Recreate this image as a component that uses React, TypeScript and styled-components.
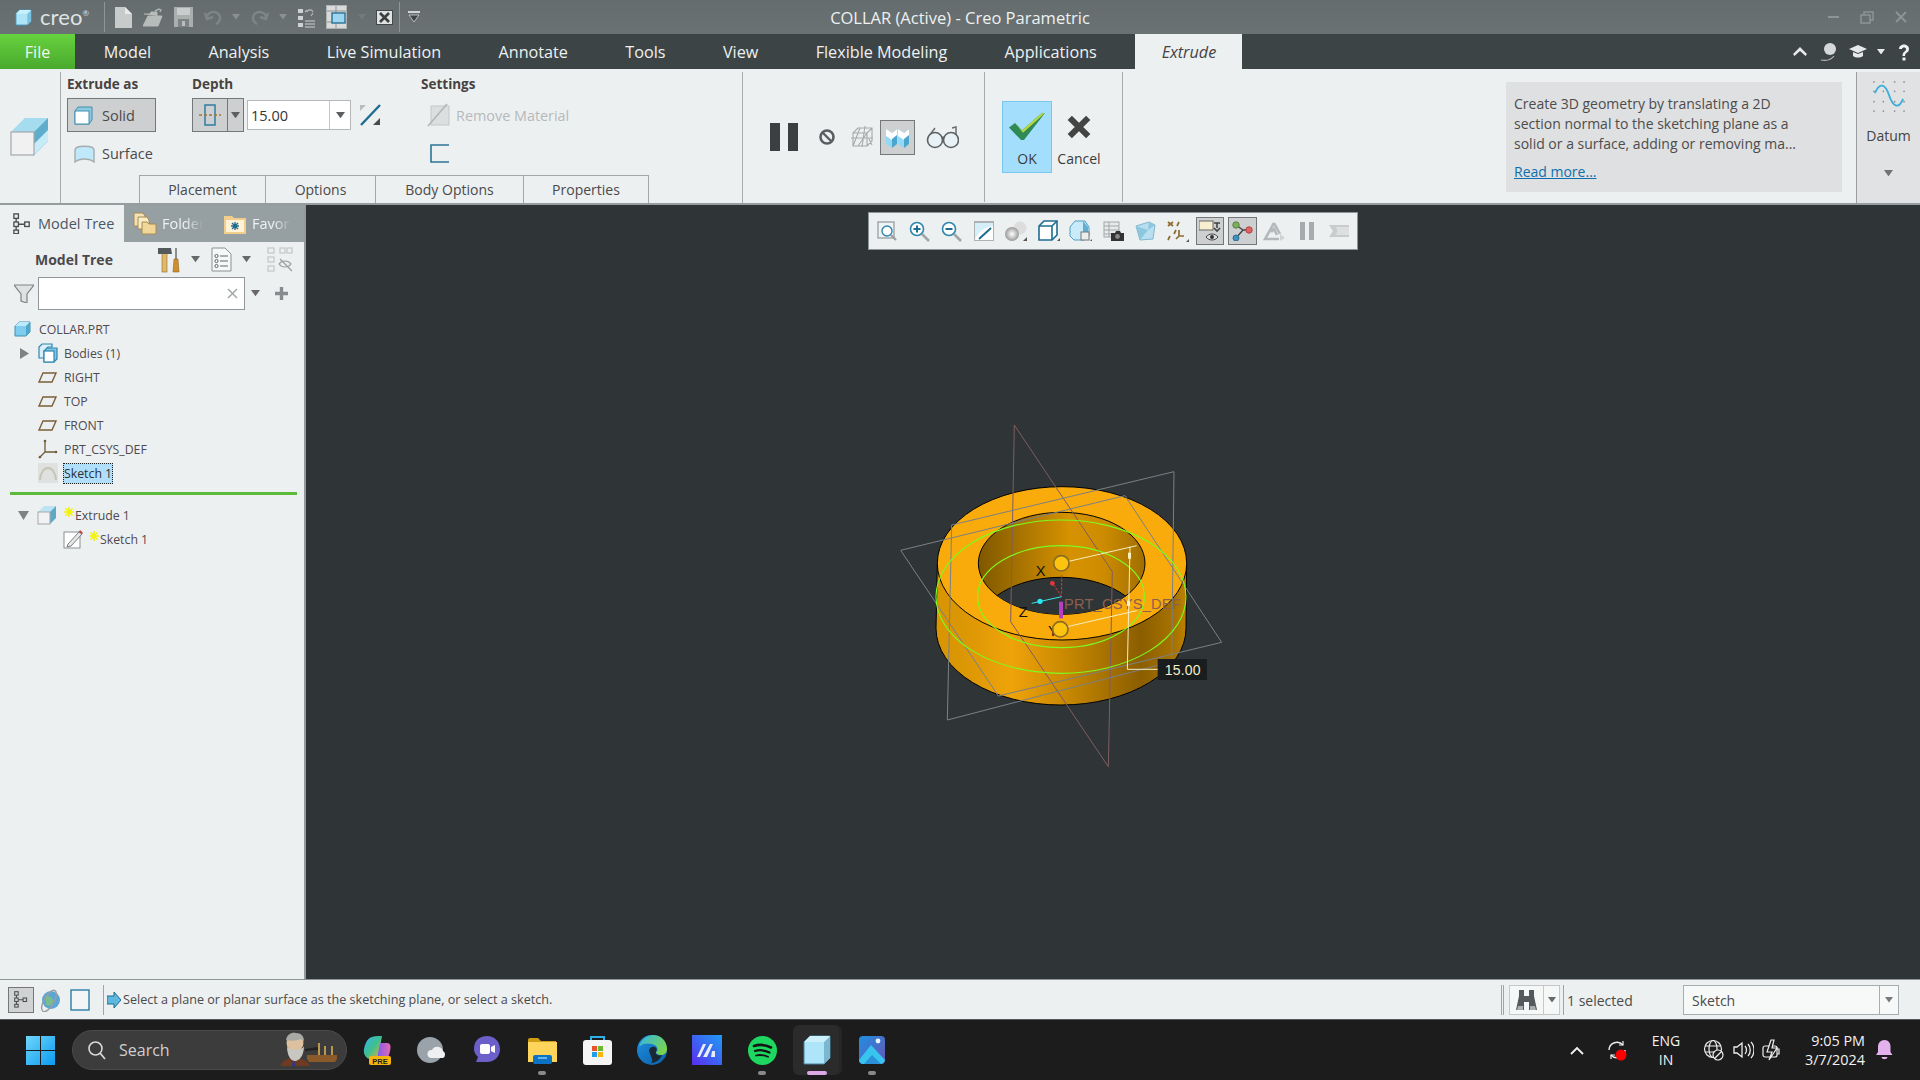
import React from "react";
import styled, { createGlobalStyle } from "styled-components";

const Global = createGlobalStyle`
  html, body { margin: 0; padding: 0; background: #2f3536; }
  body { font-family: "Open Sans", "Noto Sans", "Liberation Sans", sans-serif; overflow: hidden; }
  * { box-sizing: border-box; }
`;

const Page = styled.div`
  width: 1920px; height: 1080px; display: grid;
  grid-template-rows: 34px 35px 136px 1fr 41px 60px;
`;

/* ---------- title bar ---------- */
const TitleBar = styled.header`
  display: grid; grid-template-columns: 1fr auto 1fr; align-items: center;
  background: linear-gradient(#656c6d, #6a7273); color: #eef1f1;
`;
const QuickBar = styled.div`display: flex; align-items: center; height: 34px; padding-left: 15px;`;
const LogoText = styled.span`
  font-family: "Lato", "Open Sans", sans-serif; font-size: 22px; color: #dfe3e3; margin-left: 8px; width: 58px; letter-spacing: .1px;
  line-height: 34px;
  sup { font-size: 8px; vertical-align: 9px; line-height: 0; }
`;
const BarRule = styled.span<{ $ml: number }>`width: 1px; height: 30px; background: #8e9596; margin-left: ${p => p.$ml}px;`;
const Quick = styled.span<{ $ml: number }>`display: inline-flex; margin-left: ${p => p.$ml}px;`;
const TitleText = styled.div`font-size: 16.5px; white-space: nowrap;`;
const WindowButtons = styled.div`display: flex; justify-content: flex-end; align-items: center; gap: 21px; padding-right: 13px;`;

/* ---------- menu bar ---------- */
const MenuBar = styled.nav`display: flex; align-items: stretch; background: #3d4446;`;
const FileTab = styled.div`
  width: 75px; display: flex; align-items: center; justify-content: center; font-size: 16px; color: #f4f8f0;
  background: linear-gradient(#67d23f, #49a92d);
`;
const MenuItem = styled.div`display: flex; align-items: center; padding: 0 28.7px; font-size: 16.2px; color: #eef1f1; white-space: nowrap;`;
const ContextTab = styled.div`
  width: 107px; margin-left: 10px; display: flex; align-items: center; justify-content: center;
  background: #edf0f1; color: #444; font-style: italic; font-size: 16.2px;
`;
const MenuIcons = styled.div`margin-left: auto; display: flex; align-items: center; padding-right: 2px;`;
const MenuIcon = styled.span<{ $w: number }>`display: inline-flex; justify-content: center; width: ${p => p.$w}px;`;

/* ---------- ribbon ---------- */
const Ribbon = styled.section`display: flex; background: #edf0f1; border-bottom: 2px solid #979d9f; padding-top: 3px; color: #4a4a4a;`;
const FeatureIcon = styled.div`width: 61px; display: flex; align-items: center; justify-content: center; border-right: 1px solid #a6abad; padding-right: 2px; padding-bottom: 2px;`;
const MainGroup = styled.div`width: 682px; display: flex; flex-direction: column; justify-content: space-between; border-right: 1px solid #a6abad;`;
const Fields = styled.div`display: flex; padding-left: 6px;`;
const FieldCol = styled.div<{ $w: number }>`width: ${p => p.$w}px; display: flex; flex-direction: column;`;
const FieldLabel = styled.div`font-size: 13.5px; font-weight: 700; color: #47423f; height: 18px; line-height: 18px; margin-top: 3px; margin-bottom: 5px;`;
const ModeButton = styled.div<{ $active?: boolean }>`
  width: 89px; height: 34px; display: grid; grid-template-columns: 21px auto; align-items: center; column-gap: 7px; padding-left: 6px; font-size: 14.5px;
  background: ${p => (p.$active ? "#cdcfd1" : "transparent")};
  border: 1px solid ${p => (p.$active ? "#73777a" : "transparent")};
  & + & { margin-top: 4px; }
  svg { display: block; }
`;
const DepthRow = styled.div`display: flex; align-items: center; height: 34px;`;
const SplitButton = styled.div`
  width: 52px; height: 34px; display: grid; grid-template-columns: 34px 1fr; background: #cdcfd1; border: 1px solid #73777a;
  & > span { display: flex; align-items: center; justify-content: center; }
  & > span + span { border-left: 1px solid #73777a; }
`;
const DepthInput = styled.div`
  width: 104px; height: 30px; margin-left: 3px; background: #fff; border: 1px solid #b4b8ba; display: grid; grid-template-columns: 1fr 21px;
  font-size: 14.5px; color: #333; align-items: center; padding-left: 3px;
  & > span + span { height: 100%; display: flex; align-items: center; justify-content: center; border-left: 1px solid #c4c8ca; }
`;
const FlipWrap = styled.span`display: inline-flex; margin-left: 8px;`;
const DisabledRow = styled.div`display: flex; align-items: center; height: 34px; gap: 6px; padding-left: 6px; color: #b5b9bb; font-size: 14.4px;`;
const SquareWrap = styled.div`display: flex; padding: 12px 0 0 9px;`;
const TabsRow = styled.div`display: flex; padding-left: 78px;`;
const RibbonTab = styled.div<{ $w: number }>`
  width: ${p => p.$w}px; height: 28px; display: flex; align-items: center; justify-content: center; font-size: 14px; color: #4a4a4a;
  border: 1px solid #a3a7a9; border-bottom: 0; margin-right: -1px;
`;
const PreviewGroup = styled.div`width: 242px; display: flex; align-items: center; border-right: 1px solid #a6abad; margin-bottom: 1px;`;
const PreviewSlot = styled.span<{ $ml: number }>`display: inline-flex; margin-left: ${p => p.$ml}px;`;
const ToggleButton = styled.span<{ $ml?: number }>`
  display: inline-flex; align-items: center; justify-content: center; margin-left: ${p => p.$ml ?? 0}px;
  width: 35px; height: 35px; background: #cdcfd1; border: 1px solid #73777a;
`;
const ActionGroup = styled.div`width: 138px; display: flex; align-items: center; border-right: 1px solid #a6abad; padding-left: 17px; margin-bottom: 1px;`;
const OkButton = styled.div`
  width: 50px; height: 72px; background: #a3defc; border: 1px solid #79c6ee; display: flex; flex-direction: column; align-items: center;
  justify-content: flex-end; gap: 8px; padding-bottom: 4px; font-size: 14px; color: #3c3c3c;
`;
const CancelButton = styled(OkButton)`background: transparent; border-color: transparent; margin-left: 0; width: 54px; white-space: nowrap; gap: 10px;`;
const HelpBox = styled.aside`
  margin-left: auto; margin-right: 14px; margin-top: 10px; width: 336px; height: 110px; background: #dfe0e1; padding: 12px 8px; font-size: 14px; line-height: 20px; color: #4c4c4c;
  white-space: nowrap;
`;
const ReadMore = styled.a`display: inline-block; margin-top: 8px; color: #0d6fae; text-decoration: underline;`;
const DatumPanel = styled.div`
  width: 64px; background: #e0e2e3; border-left: 1px solid #999fa1; display: flex; flex-direction: column; align-items: center; font-size: 14px; color: #444;
  padding-top: 8px;
  span { margin-top: 14px; }
  svg + span + svg { margin-top: 25px; }
`;

/* ---------- body ---------- */
const Body = styled.div`display: grid; grid-template-columns: 306px 1fr; min-height: 0;`;
const SidePanel = styled.aside`background: #edf0f1; border-right: 2px solid #959b9d; display: flex; flex-direction: column; color: #4b4a4c;`;
const PanelTabs = styled.div`display: flex; height: 37px;`;
const PanelTab = styled.div<{ $active?: boolean; $w: number; $gap: number }>`
  width: ${p => p.$w}px; display: flex; align-items: center; font-size: 14.5px; gap: ${p => p.$gap}px; padding-left: ${p => (p.$active ? 13 : 9)}px;
  background: ${p => (p.$active ? "#edf0f1" : "#96a0a2")};
  color: ${p => (p.$active ? "#4b5663" : "#eef1f1")};
  white-space: nowrap;
`;
const FadedLabel = styled.span`
  display: inline-block;
  -webkit-mask-image: linear-gradient(90deg, #000 55%, transparent 96%);
  mask-image: linear-gradient(90deg, #000 55%, transparent 96%);
`;
const PanelHeader = styled.div`height: 35px; display: flex; align-items: center; padding-left: 35px;`;
const PanelTitle = styled.div`font-size: 14px; font-weight: 700; color: #4b4a4c; width: 123px;`;
const HeaderIcon = styled.span<{ $ml?: number }>`display: inline-flex; margin-left: ${p => p.$ml ?? 0}px;`;
const FilterRow = styled.div`height: 33px; display: flex; align-items: center; padding-left: 14px;`;
const SearchField = styled.div`
  width: 207px; height: 33px; margin-left: 4px; background: #fff; border: 1px solid #8f979a; display: flex; align-items: center; justify-content: flex-end; padding-right: 6px;
`;
const Tree = styled.div`padding-top: 7px;`;
const TreeRow = styled.div<{ $pad: number }>`
  height: 24px; display: flex; align-items: center; padding-left: ${p => p.$pad}px; font-size: 12.3px; color: #4f4a50; white-space: nowrap;
`;
const TreeArrow = styled.span`display: inline-flex; width: 24px; justify-content: center; margin-right: 2px;`;
const TreeIcon = styled.span<{ $w: number }>`display: inline-flex; width: ${p => p.$w}px; justify-content: flex-start;`;
const SelectedLabel = styled.span`
  display: inline-flex; align-items: center; height: 21px; padding: 0 1px; background: #afdffb; outline: 1px dotted #222; outline-offset: -1px; color: #2b3034;
`;
const GreenRule = styled.div`height: 3px; background: #5dbb3c; margin: 7px 7px 8px 10px;`;
const Viewport = styled.main`position: relative; background: #2f3536; display: flex; flex-direction: column; align-items: center; padding-top: 7px; overflow: hidden;`;
const ViewBar = styled.div`
  width: 490px; height: 38px; background: #edf0f1; border: 1px solid #8e9597; display: flex; align-items: center; padding-left: 2px;
`;
const ViewSlot = styled.span<{ $on?: boolean }>`
  width: ${p => (p.$on ? 28.3 : 32.3)}px; height: 28px; margin: 0 ${p => (p.$on ? 2 : 0)}px; display: inline-flex; align-items: center; justify-content: center;
  background: ${p => (p.$on ? "#cdcfd1" : "transparent")}; border: 1px solid ${p => (p.$on ? "#73777a" : "transparent")};
`;
const ModelCanvas = styled.svg`position: absolute; left: 554px; top: 200px; width: 380px; height: 385px;`;

/* ---------- status bar ---------- */
const StatusBar = styled.footer`
  display: flex; align-items: center; background: #edf0f1; border-top: 1px solid #8d9496; border-bottom: 1px solid #53595b; color: #4a4a4a; font-size: 12.6px;
`;
const StatusToggle = styled.span`
  margin-left: 8px; width: 26px; height: 26px; background: #d0d2d3; border: 1px solid #777; display: inline-flex; align-items: center; justify-content: center;
`;
const StatusIcon = styled.span<{ $ml: number }>`display: inline-flex; margin-left: ${p => p.$ml}px;`;
const StatusRule = styled.span<{ $ml: number }>`width: 1px; height: 30px; background: #a0a5a7; margin-left: ${p => p.$ml}px;`;
const StatusMessage = styled.span`margin-left: 2px; white-space: nowrap;`;
const StatusRight = styled.div`margin-left: auto; display: flex; align-items: center; padding-right: 21px;`;
const FindButton = styled.div`
  width: 51px; height: 30px; margin-left: 5px; display: grid; grid-template-columns: 33px 1fr; background: #f6f7f7; border: 1px solid #c4c8ca;
  & > span { display: flex; align-items: center; justify-content: center; }
  & > span + span { border-left: 1px solid #c4c8ca; }
`;
const SelectedCount = styled.span`width: 116px; margin-left: 3px; font-size: 14px; white-space: nowrap; padding-top: 1px;`;
const FilterSelect = styled.div`
  width: 216px; height: 30px; margin-top: 1px; background: #f7f8f8; border: 1px solid #a8adaf; display: grid; grid-template-columns: 1fr 19px; align-items: center; padding-left: 8px; font-size: 14px;
  & > span + span { height: 100%; display: flex; align-items: center; justify-content: center; border-left: 1px solid #a8adaf; }
`;

/* ---------- taskbar ---------- */
const Taskbar = styled.footer`display: flex; align-items: center; background: #1c1c1c; padding-left: 26px; color: #f0f0f0;`;
const SearchPill = styled.div`
  width: 275px; height: 40px; margin: 0 2.5px 0 17px; border-radius: 20px; background: #3c3c3c; border: 1px solid #4a4a4a; display: flex; align-items: center; padding-left: 15px; gap: 13px;
  font-size: 16px; color: #cfcfcf;
  & > svg:last-child { margin-left: auto; margin-right: 7px; }
`;
const AppSlot = styled.span<{ $active?: boolean }>`
  position: relative; width: 55px; height: 60px; display: inline-flex; align-items: center; justify-content: center;
  &::before { content: ""; display: ${p => (p.$active ? "block" : "none")}; position: absolute; left: 3px; top: 5px; width: 46px; height: 50px; border-radius: 6px; background: #2b2b2b; box-shadow: 3px 0 0 #262626; z-index: 0; }
  svg { position: relative; z-index: 1; }
`;
const AppDot = styled.i<{ $active?: boolean }>`
  position: absolute; bottom: 5px; left: 50%; transform: translateX(-50%); height: 4px; border-radius: 2px; z-index: 1;
  width: ${p => (p.$active ? 20 : 8)}px; background: ${p => (p.$active ? "#dca8e6" : "#8a8a8a")};
`;
const Tray = styled.div`margin-left: auto; display: flex; align-items: center; padding-right: 27px; font-size: 14px; color: #f2f2f2;`;
const TrayIcon = styled.span<{ $w: number }>`display: inline-flex; justify-content: center; width: ${p => p.$w}px;`;
const LangBlock = styled.div`width: 40px; text-align: center; line-height: 19px; margin: 0 17px 0 0; font-size: 14px;`;
const ClockBlock = styled.div`width: 78px; text-align: right; line-height: 19px; font-size: 14.4px; margin-left: 5px; white-space: nowrap;`;
const BellSlot = styled.span`display: inline-flex; margin-left: 11px;`;

/* ---------- icons ---------- */
const Caret = ({ c = "#c9cdce", s = 10 }: { c?: string; s?: number }) => (
  <svg width={s} height={s * 0.7} viewBox="0 0 10 7"><path d="M0 0h10L5 7z" fill={c} /></svg>
);
const Cube = ({ s = 18 }: { s?: number }) => (
  <svg width={s} height={s} viewBox="0 0 18 18">
    <path d="M1 5 5 1h12v12l-4 4H1z" fill="#aee4f8" stroke="#3f96bb" strokeWidth="1" />
    <path d="M13 5 17 1v12l-4 4z" fill="#78c3e2" /><path d="M1 5 5 1h12l-4 4z" fill="#c9effc" />
  </svg>
);
const Doc = () => (
  <svg width="17" height="21" viewBox="0 0 17 21"><path d="M0 0h10l7 7v14H0z" fill="#c7cbca" /><path d="M10 0l7 7h-7z" fill="#e8eaea" /></svg>
);
const OpenFolder = () => (
  <svg width="20" height="19" viewBox="0 0 20 19"><path d="M1 6h6l1-2h6v4H5L0 18h15l4-10h-5" fill="#b7bbb9" stroke="#b7bbb9" /><path d="M12 3l4-2 2 1-1 2" fill="none" stroke="#aeb2b2" strokeWidth="1.5" /></svg>
);
const Save = () => (
  <svg width="19" height="20" viewBox="0 0 19 20"><rect width="19" height="20" fill="#aaaeac" /><rect x="3" y="1" width="13" height="7" fill="#c9cccc" /><rect x="4" y="12" width="11" height="8" fill="#7d8384" /><rect x="8" y="14" width="3" height="5" fill="#b8bcbc" /></svg>
);
const Undo = ({ flip }: { flip?: boolean }) => (
  <svg width="18" height="16" viewBox="0 0 18 16" style={flip ? { transform: "scaleX(-1)" } : undefined}><path d="M3 9c0-8 13-8 13 0 0 3-2 5-4 6M1 4l2 6 6-2" fill="none" stroke="#7e8585" strokeWidth="2.4" /></svg>
);
const ListTree = () => (
  <svg width="19" height="23" viewBox="0 0 19 23"><g fill="#cfd2d2"><rect x="1" y="3" width="5" height="4" /><rect x="1" y="10" width="5" height="4" /><rect x="1" y="17" width="5" height="4" /></g><path d="M8 15h10M8 18h10M8 21h10" stroke="#cfd2d2" strokeWidth="1.2" /><path d="M10 6c1-3 5-3 6 0M16 7l-2 3M8 6l2-2" fill="none" stroke="#aeb2b2" strokeWidth="1.3" /></svg>
);
const Windows2 = () => (
  <svg width="21" height="25" viewBox="0 0 21 25"><rect x=".5" y=".5" width="20" height="23" fill="#d9dbdb" stroke="#aeb2b2" /><path d="M1 6h19M10 1v22M1 17h19" stroke="#8e9596" strokeWidth="1" /><rect x="6" y="8" width="13" height="10" fill="#9ed6f1" stroke="#2d6f93" strokeWidth="1.4" /></svg>
);
const WinClose = () => (
  <svg width="17" height="15" viewBox="0 0 17 15"><rect x=".5" y=".5" width="16" height="14" fill="#e0e2e2" stroke="#43494a" /><path d="M4 3l9 9M13 3l-9 9" stroke="#3a3f40" strokeWidth="2.6" /></svg>
);
const CustomizeArrow = () => (
  <svg width="12" height="12" viewBox="0 0 12 12"><path d="M0 0h12v2H0z" fill="#d3d6d6" /><path d="M1 4h10L6 11z" fill="#3f4546" stroke="#d3d6d6" strokeWidth=".8" /></svg>
);
const SolidCube = () => (
  <svg width="19" height="19" viewBox="0 0 19 19"><path d="M1 5l3-4h14v13l-3 4H1z" fill="#8dc9df" stroke="#3f8fb0" /><rect x="1" y="5" width="14" height="13" fill="#fff" stroke="#3f8fb0" /></svg>
);
const SurfaceIcon = () => (
  <svg width="21" height="19" viewBox="0 0 21 19"><path d="M1 18V6C1 1 20 1 20 6v12c-5-4-14-4-19 0z" fill="#bfe8fa" stroke="#a6acae" strokeWidth="1.4" /></svg>
);
const ExtrudeBig = () => (
  <svg width="39" height="39" viewBox="0 0 39 39">
    <path d="M1 15 15 1h23v23L24 38z" fill="#bee6f6" /><path d="M1 15 15 1h23L24 15z" fill="#a6dcf0" />
    <path d="M24 15 38 1v23L24 38z" fill="#5eaecb" /><path d="M24 27 38 13v11L24 38z" fill="#c8ecf7" />
    <rect x="1" y="15" width="23" height="23" fill="#f1f1f1" stroke="#a5a9ab" strokeWidth="1.2" />
  </svg>
);
const DepthSymbol = () => (
  <svg width="24" height="22" viewBox="0 0 24 22"><rect x="7" y="1" width="10" height="20" fill="none" stroke="#2e7ea3" strokeWidth="1.5" /><path d="M1 11h22" stroke="#9a7a3c" strokeWidth="1.3" strokeDasharray="3 2" /></svg>
);
const FlipIcon = () => (
  <svg width="22" height="22" viewBox="0 0 22 22"><path d="M1 1h6L1 7z" fill="#b8bcbe" /><path d="M2 21 21 1" stroke="#1f6c91" strokeWidth="2.4" /><path d="M21 21h-7l7-7z" fill="#4a4a4a" /></svg>
);
const RemoveIcon = () => (
  <svg width="23" height="24" viewBox="0 0 23 24"><rect x="4" y="3" width="18" height="19" fill="#dcdfe0" stroke="#c4c7c9" /><path d="M1 23 20 1" stroke="#b3b7b9" strokeWidth="1.6" /></svg>
);
const SideSquare = () => (
  <svg width="20" height="19" viewBox="0 0 20 19"><path d="M19 1H1v17h18" fill="none" stroke="#2b7396" strokeWidth="1.6" /></svg>
);
const Pause = () => (
  <svg width="28" height="28" viewBox="0 0 28 28"><rect width="10" height="28" fill="#3b3f41" /><rect x="18" width="10" height="28" fill="#3b3f41" /></svg>
);
const NoIcon = () => (
  <svg width="18" height="18" viewBox="0 0 18 18"><circle cx="9" cy="9" r="6.5" fill="none" stroke="#5a5e60" strokeWidth="2.6" /><path d="M5 5l8 8" stroke="#5a5e60" strokeWidth="2.4" /></svg>
);
const MeshIcon = () => (
  <svg width="24" height="24" viewBox="0 0 24 24" fill="none" stroke="#a7aaac" strokeWidth="1.1"><path d="M3 8h14v13H3zM3 8l5-5h14v13l-5 5M17 8l5-5M10 3l-7 18M17 8 8 21M1 13h22M15 1l-3 21M19 14l3 6" /></svg>
);
const ShadeIcon = () => (
  <svg width="25" height="25" viewBox="0 0 25 25">
    {[1, 13].map(x => (
      <g key={x}>
        <path d={`M${x} 4l6 4v15l-6-4z`} fill="#93d9f6" />
        <path d={`M${x} 4l6 4v7l-6-4z`} fill="#fff" />
        <path d={`M${x + 6} 8l5-4v15l-5 4z`} fill="#4ba5cd" />
        <path d={`M${x + 6} 8l5-4v6l-5 4z`} fill="#fff" />
      </g>
    ))}
  </svg>
);
const Glasses = () => (
  <svg width="33" height="24" viewBox="0 0 33 24"><path d="M3 11 9 3M30 11V2l-4 1" fill="none" stroke="#6a6e70" strokeWidth="1.5" /><circle cx="9" cy="15" r="7.5" fill="#e8f2f6" stroke="#5d6163" strokeWidth="1.6" /><circle cx="25" cy="15" r="7.5" fill="#e8f2f6" stroke="#5d6163" strokeWidth="1.6" /><path d="M16 13c.5-1 1.5-1 2 0" fill="none" stroke="#5d6163" strokeWidth="1.4" /></svg>
);
const Check = () => (
  <svg width="36" height="29" viewBox="0 0 36 32" preserveAspectRatio="none"><path d="M0 17l6-5 7 8L32 2l4-1-21 30h-3z" fill="#2f8a55" /><path d="M6 12l7 8L32 2l4-1-22 22z" fill="#b5d844" /></svg>
);
const CrossBig = () => (
  <svg width="24" height="24" viewBox="0 0 26 26"><path d="M3 3l20 20M23 3 3 23" stroke="#444" strokeWidth="6.5" /></svg>
);
const DatumIcon = () => (
  <svg width="34" height="32" viewBox="0 0 36 34"><g fill="#8b8f91">{[2, 12, 24, 34].flatMap(x => [2, 12, 23, 33].map(y => <circle key={x + "-" + y} cx={x} cy={y} r=".9" />))}</g><path d="M3 14C8 2 14 4 18 16c4 12 10 16 15 4" fill="none" stroke="#3caedb" strokeWidth="2" /></svg>
);
const NodesIcon = ({ s = 20, c = "#4b4f51" }: { s?: number; c?: string }) => (
  <svg width={s} height={s * 1.2} viewBox="0 0 20 24" fill="none" stroke={c} strokeWidth="1.5"><rect x="1" y="1" width="5" height="5" /><rect x="1" y="10" width="5" height="5" /><rect x="1" y="19" width="5" height="4" /><rect x="13" y="10" width="5" height="5" /><path d="M3.5 6v4M3.5 15v4M6 12.5h7" /></svg>
);
const FolderTabIcon = () => (
  <svg width="24" height="23" viewBox="0 0 24 23"><path d="M1 1h9l2 3v10H1z" fill="#f4e2b5" stroke="#a58a55" /><path d="M5 5h9l2 3v9H5z" fill="#f8ecc8" stroke="#a58a55" /><path d="M9 10h5l2 2h7v10H9z" fill="#f0d798" stroke="#a58a55" /></svg>
);
const FavIcon = () => (
  <svg width="22" height="20" viewBox="0 0 22 20"><path d="M0 2h8l2 2h12v16H0z" fill="#f1ce8c" /><rect x="2" y="6" width="18" height="12" fill="#fff2d6" /><path d="M11 8v8M7 12h8M8 9l6 6M14 9l-6 6" stroke="#1f6c91" strokeWidth="1.4" /></svg>
);
const Hammer = () => (
  <svg width="22" height="26" viewBox="0 0 22 26"><rect x="4" y="5" width="5" height="20" fill="#e2b867" stroke="#8d6a2f" strokeWidth=".6" /><path d="M0 1h13l1 6H0z" fill="#54595c" /><rect x="17" y="1" width="2" height="11" fill="#8b8f91" /><path d="M16 12h4l1 13h-6z" fill="#cf8f2c" stroke="#7d5517" strokeWidth=".5" /></svg>
);
const ListDoc = () => (
  <svg width="21" height="25" viewBox="0 0 21 25"><path d="M1 1h13l6 6v17H1z" fill="#f6f7f7" stroke="#8c9092" /><g stroke="#63686a" strokeWidth="1.2"><path d="M9 9h8M9 14h8M9 19h8" /></g><g fill="none" stroke="#63686a"><circle cx="5.5" cy="9" r="1.6" /><circle cx="5.5" cy="14" r="1.6" /><circle cx="5.5" cy="19" r="1.6" /></g></svg>
);
const HideTree = () => (
  <svg width="26" height="25" viewBox="0 0 26 25" fill="none" stroke="#c3c6c8" strokeWidth="1.2"><rect x="1" y="1" width="6" height="5" /><rect x="1" y="10" width="6" height="5" /><rect x="1" y="19" width="6" height="5" /><rect x="13" y="1" width="5" height="5" /><rect x="20" y="1" width="5" height="5" /><path d="M12 17c3-4 9-4 12 0-3 4-9 4-12 0z" stroke="#9a9ea0" /><path d="M13 12l12 12" stroke="#9a9ea0" /></svg>
);
const Funnel = () => (
  <svg width="20" height="19" viewBox="0 0 20 19"><path d="M0 1h20l-7 9v9l-6-2v-7z" fill="#dfe1e2" stroke="#7f8386" strokeWidth="1.2" /></svg>
);
const SmallX = () => (
  <svg width="11" height="11" viewBox="0 0 11 11"><path d="M1 1l9 9M10 1l-9 9" stroke="#a3a7a9" strokeWidth="1.5" /></svg>
);
const Plus = () => (
  <svg width="15" height="15" viewBox="0 0 15 15"><path d="M7.5 1v13M1 7.5h13" stroke="#878b8d" strokeWidth="3.4" /></svg>
);
const PartIcon = () => (
  <svg width="17" height="16" viewBox="0 0 17 16"><path d="M1 5l4-4h11v10l-4 4H1z" fill="#7fcdee" stroke="#3f8fb0" /><path d="M1 5l4-4h11l-4 4z" fill="#bde9fa" /><path d="M12 5l4-4v10l-4 4z" fill="#4fa7cd" /></svg>
);
const BodiesIcon = () => (
  <svg width="20" height="20" viewBox="0 0 20 20"><path d="M1 4l3-3h10v3h-4l-3 4v7H1z" fill="#d9eff9" stroke="#2d86ad" strokeWidth="1.2" /><path d="M6 8l3-3h10v11l-3 3H6z" fill="#7ec6e4" stroke="#2d86ad" strokeWidth="1.2" /><rect x="6" y="8" width="10" height="11" fill="#fff" stroke="#2d86ad" strokeWidth="1.2" /></svg>
);
const PlaneIcon = () => (
  <svg width="19" height="11" viewBox="0 0 19 11"><path d="M5 1h13l-4 9H1z" fill="none" stroke="#7a5f3a" strokeWidth="1.4" /></svg>
);
const CsysIcon = () => (
  <svg width="20" height="20" viewBox="0 0 20 20"><path d="M7 1v12l-6 6M7 13h12" fill="none" stroke="#6f5a3a" strokeWidth="1.3" /><g fill="#6f5a3a"><circle cx="7" cy="2" r="1.3" /><circle cx="18" cy="13" r="1.3" /><circle cx="2" cy="18" r="1.3" /></g></svg>
);
const SketchGhost = () => (
  <svg width="20" height="20" viewBox="0 0 20 20"><rect width="20" height="20" fill="#dfe1e0" /><path d="M2 17c1-16 15-16 16 0" fill="none" stroke="#c3c5b5" strokeWidth="2" /></svg>
);
const ExtrudeSmall = () => (
  <svg width="20" height="20" viewBox="0 0 20 20"><path d="M1 7l6-6h12v12l-6 6H1z" fill="#bde4f5" /><path d="M13 7l6-6v12l-6 6z" fill="#5ea9c8" /><rect x="1" y="7" width="12" height="12" fill="#f2f2f2" stroke="#a3a7a9" /></svg>
);
const SketchPencil = () => (
  <svg width="20" height="20" viewBox="0 0 20 20"><rect x="1" y="3" width="16" height="16" fill="#fff" stroke="#8b8f91" /><path d="M5 15 16 3l3 2L8 17l-4 1z" fill="#e6e8e8" stroke="#5b5f61" strokeWidth=".8" /><path d="M16 3l1-2 3 3-1 1z" fill="#c43c36" /></svg>
);
const StarMark = styled.svg`margin-bottom: 7px; margin-right: 1px;`;
const Star = () => (
  <StarMark width="10" height="10" viewBox="0 0 10 10"><path d="M5 0v10M0 5h10M1.5 1.5l7 7M8.5 1.5l-7 7" stroke="#f2f20f" strokeWidth="1.7" /></StarMark>
);

const ViewIcons: React.ReactNode[] = [
  <svg width="20" height="20" viewBox="0 0 20 20" key="a"><rect x="1" y="1" width="16" height="16" fill="#eef3f5" stroke="#9a9ea0" strokeWidth="1.3" /><circle cx="10" cy="10" r="5" fill="#fff" stroke="#2d86ad" strokeWidth="1.4" /><path d="M14 14l5 5" stroke="#9a9ea0" strokeWidth="2.2" /></svg>,
  <svg width="21" height="21" viewBox="0 0 21 21" key="b"><circle cx="8" cy="8" r="6.5" fill="#fff" stroke="#2d86ad" strokeWidth="1.6" /><path d="M8 4.5v7M4.5 8h7" stroke="#1f6c91" strokeWidth="2" /><path d="M13 13l7 7" stroke="#a3a7a9" strokeWidth="2.6" /></svg>,
  <svg width="21" height="21" viewBox="0 0 21 21" key="c"><circle cx="8" cy="8" r="6.5" fill="#fff" stroke="#2d86ad" strokeWidth="1.6" /><path d="M4.5 8h7" stroke="#1f6c91" strokeWidth="2" /><path d="M13 13l7 7" stroke="#a3a7a9" strokeWidth="2.6" /></svg>,
  <svg width="20" height="20" viewBox="0 0 20 20" key="d"><rect width="20" height="20" fill="#aeb2b4" /><rect x="1" y="2" width="18" height="17" fill="#d4eefa" /><path d="M1 19c2-7 9-13 18-14v14z" fill="#fff" /><path d="M5 18 17 7" stroke="#1f6c91" strokeWidth="2" /></svg>,
  <svg width="22" height="21" viewBox="0 0 22 21" key="e"><defs><radialGradient id="sph"><stop offset="0" stopColor="#fff" /><stop offset="1" stopColor="#9a9a9a" /></radialGradient></defs><circle cx="15" cy="7" r="6.5" fill="#ddd" /><circle cx="7" cy="13" r="7" fill="url(#sph)" /><path d="M18 20h4v-4z" fill="#555" /></svg>,
  <svg width="22" height="22" viewBox="0 0 22 22" key="f"><path d="M1 6l5-5h13v14l-5 5H1z" fill="#fff" stroke="#1f6c91" strokeWidth="1.6" /><path d="M1 6h13v14M14 6l5-5" fill="none" stroke="#1f6c91" strokeWidth="1.6" /><path d="M19 21h3v-3z" fill="#555" /></svg>,
  <svg width="23" height="22" viewBox="0 0 23 22" key="g"><path d="M1 7l5-6h10l4 6v9l-5 4H5L1 16z" fill="#c9ebf9" stroke="#4c9fc4" /><path d="M14 1l5 6v9h-5z" fill="#63add0" /><rect x="12" y="12" width="8" height="8" fill="#eceded" stroke="#777" /><path d="M21 21h2v-2z" fill="#555" /></svg>,
  <svg width="21" height="20" viewBox="0 0 21 20" key="h"><rect x="1" y="1" width="15" height="15" fill="#e8eaea" stroke="#a3a7a9" /><path d="M1 5h15M1 9h15M1 13h15M6 1v15" stroke="#a3a7a9" /><path d="M8 12h4l1-2h4l1 2h3v8H8z" fill="#333" /><circle cx="14.5" cy="15.5" r="2.4" fill="#888" /></svg>,
  <svg width="21" height="20" viewBox="0 0 21 20" key="i"><path d="M1 5l13-4 6 3-2 14-13 1z" fill="#b8dfef" stroke="#7fb7cf" /><path d="M14 1l-1 8 7-5zM1 5l12 4-8 10z" fill="#8cc7de" /></svg>,
  <svg width="22" height="21" viewBox="0 0 22 21" key="j" fill="none" stroke="#8d6a2f" strokeWidth="1.7"><path d="M1 1l5 4M6 1 1 5M12 1l-2 4M9 9l-2 4M3 15l-2 4M12 9v6h5M12 15l-3 3" /><path d="M19 21h3v-3z" fill="#555" stroke="none" /></svg>,
  <svg width="22" height="22" viewBox="0 0 22 22" key="k"><rect x="0" y="1" width="14" height="9" fill="#f8efd0" stroke="#666" /><path d="M15 3h6M18 3v5M15 8l3 3 3-3" fill="none" stroke="#444" strokeWidth="1.6" /><path d="M7 17c3-4 9-4 12 0-3 4-9 4-12 0z" fill="#ddd" stroke="#444" /><circle cx="13" cy="17" r="2" fill="#333" /></svg>,
  <svg width="22" height="20" viewBox="0 0 22 20" key="l"><path d="M5 4l7 5M5 17l7-8M12 9h6" stroke="#444" strokeWidth="1.4" /><circle cx="5" cy="4" r="3.2" fill="#7cb05a" stroke="#587f41" /><circle cx="5" cy="17" r="3" fill="#3f8ec0" stroke="#2d6f93" /><circle cx="18" cy="9" r="3.2" fill="#e26060" stroke="#ad4545" /></svg>,
  <svg width="23" height="21" viewBox="0 0 23 21" key="m" fill="none" stroke="#b5b8ba" strokeWidth="2.6"><path d="M11 2 2 18h14M11 2l6 11M8 11l3-3 3 6" /><path d="M17 13l5 4-5 3z" fill="#d0d2d3" stroke="none" /></svg>,
  <svg width="14" height="18" viewBox="0 0 14 18" key="n"><rect width="5" height="18" fill="#a8abad" /><rect x="9" width="5" height="18" fill="#a8abad" /></svg>,
  <svg width="20" height="14" viewBox="0 0 20 14" key="o"><path d="M0 1h20v12H0l4-6z" fill="#c9cccd" /><path d="M6 3h14v8H6c3-2 3-6 0-8z" fill="#dedfe0" /></svg>,
];

const Page3DModel = () => (
  <ModelCanvas viewBox="0 0 1140 1155">
    <defs>
      <linearGradient id="side" gradientUnits="userSpaceOnUse" x1="228" x2="978" y1="0" y2="0">
        <stop offset="0" stopColor="#d99404" /><stop offset=".12" stopColor="#dc9704" /><stop offset=".3" stopColor="#efa30a" />
        <stop offset=".5" stopColor="#cc8b02" /><stop offset=".82" stopColor="#8b5e00" /><stop offset=".96" stopColor="#a97400" /><stop offset="1" stopColor="#bd8200" />
      </linearGradient>
      <linearGradient id="hole" gradientUnits="userSpaceOnUse" x1="355" x2="855" y1="0" y2="0">
        <stop offset="0" stopColor="#7f5700" /><stop offset=".25" stopColor="#a77300" /><stop offset=".55" stopColor="#d69200" /><stop offset=".75" stopColor="#cd8c00" /><stop offset="1" stopColor="#a06e00" />
      </linearGradient>
      <clipPath id="holeClip"><ellipse cx="605" cy="475" rx="250" ry="153" /></clipPath>
    </defs>
    <path d="M232 475 228 670A375 230 0 0 0 978 670L980 475Z" fill="url(#side)" stroke="#000" strokeWidth="3" />
    <ellipse cx="606" cy="475" rx="374" ry="230" fill="#f9ab0b" stroke="#000" strokeWidth="3" />
    <ellipse cx="605" cy="475" rx="250" ry="153" fill="url(#hole)" stroke="#000" strokeWidth="3" />
    <g clipPath="url(#holeClip)"><ellipse cx="603" cy="670" rx="250" ry="153" fill="#2f3536" stroke="#000" strokeWidth="3" /></g>
    <g fill="none" strokeWidth="3">
      <path d="M463 60 757 500 745 1085 452 650Z" stroke="#7f5c60" />
      <path d="M275 360 942 200 935 770 262 945Z" stroke="#7a8085" />
      <path d="M122 436 795 272 1085 712 415 873Z" stroke="#7a8085" />
      <ellipse cx="603" cy="575" rx="375" ry="230" stroke="#7cfc20" strokeWidth="3.4" />
      <ellipse cx="603" cy="575" rx="250" ry="153" stroke="#7cfc20" strokeWidth="3.4" />
    </g>
    <text x="612" y="612" fontFamily="Liberation Sans, sans-serif" fontSize="44" fill="#8c5f50" textLength="350">PRT_CSYS_DEF</text>
    <text x="527" y="513" fontFamily="Liberation Sans, sans-serif" fontSize="44" fill="#111">X</text>
    <text x="476" y="637" fontFamily="Liberation Sans, sans-serif" fontSize="44" fill="#111">Z</text>
    <text x="564" y="692" fontFamily="Liberation Sans, sans-serif" fontSize="44" fill="#111">Y</text>
    <path d="M605 575 575 530M605 510v60" stroke="#e03a3a" strokeWidth="3" strokeDasharray="8 4" />
    <circle cx="577" cy="535" r="7" fill="#e8353a" />
    <path d="M605 575 515 595" stroke="#35e6f0" strokeWidth="3" />
    <circle cx="540" cy="589" r="8" fill="#27e9f5" />
    <rect x="597" y="590" width="12" height="50" fill="#b43fc0" />
    <g fill="none" stroke="#f6efbf" strokeWidth="3">
      <path d="M622 470 830 422M622 665 830 617" />
      <path d="M810 425 802 793H895" />
    </g>
    <rect x="804" y="443" width="9" height="18" fill="#f8f0c0" /><rect x="801" y="587" width="9" height="16" fill="#f8f0c0" />
    <circle cx="604" cy="475" r="23" fill="#fcc40e" stroke="#8a6c25" strokeWidth="5" />
    <circle cx="601" cy="673" r="23" fill="#fcc40e" stroke="#8a6c25" strokeWidth="5" />
    <rect x="893" y="762" width="148" height="63" fill="#191d1d" />
    <text x="914" y="810" fontFamily="Liberation Sans, sans-serif" fontSize="42" fill="#f4efc8" textLength="108">15.00</text>
  </ModelCanvas>
);

const AppCopilot = () => (
  <svg width="29" height="31" viewBox="0 0 29 31"><defs><linearGradient id="cp" x1="0" x2="1" y1="0" y2="1"><stop offset="0" stopColor="#35b5f0" /><stop offset=".5" stopColor="#3ebf8e" /><stop offset="1" stopColor="#e9b43a" /></linearGradient><linearGradient id="cp2" x1="0" x2="1"><stop offset="0" stopColor="#7a5be8" /><stop offset="1" stopColor="#e867b8" /></linearGradient></defs><path d="M1 14C3 4 7 1 15 1h4l-4 23H8C3 24 0 19 1 14z" fill="url(#cp)" /><path d="M17 8h7c4 0 4 4 3 8-1 6-3 8-8 8h-5z" fill="url(#cp2)" /><rect x="6" y="21" width="22" height="9" rx="2" fill="#f5b50c" /><text x="17" y="28.5" fontFamily="Liberation Sans, sans-serif" fontSize="7.5" fontWeight="700" fill="#222" textAnchor="middle">PRE</text></svg>
);
const AppWeather = () => (
  <svg width="30" height="28" viewBox="0 0 30 28"><circle cx="13" cy="14" r="13" fill="#9aa2aa" /><path d="M14 22a4 4 0 0 1 1-8 6 6 0 0 1 11 1 4 4 0 0 1 0 7z" fill="#eef0f2" /></svg>
);
const AppChat = () => (
  <svg width="28" height="30" viewBox="0 0 28 30"><path d="M14 1c8 0 13 6 13 13s-5 13-13 13H3l2-5C2 19 1 17 1 14 1 6 6 1 14 1z" fill="#6b5fc9" /><rect x="7" y="9" width="10" height="10" rx="2" fill="#fff" /><path d="M18 12l4-2v8l-4-2z" fill="#fff" /></svg>
);
const AppExplorer = () => (
  <svg width="31" height="28" viewBox="0 0 31 28"><path d="M1 4a2 2 0 0 1 2-2h8l3 3h15v8H1z" fill="#d19d12" /><path d="M1 6h29v20H1z" fill="#fdd55a" /><rect x="6" y="19" width="19" height="9" rx="2" fill="#0c72c4" /><rect x="11" y="21" width="9" height="2" fill="#66b6ee" /></svg>
);
const AppStore = () => (
  <svg width="29" height="30" viewBox="0 0 29 30"><path d="M8 6V2h13v4" fill="none" stroke="#2bb0e8" strokeWidth="2" /><rect y="5" width="29" height="25" rx="3" fill="#f5f5f5" /><rect x="9" y="11" width="5" height="5" fill="#e8532b" /><rect x="15" y="11" width="5" height="5" fill="#6ab82f" /><rect x="9" y="17" width="5" height="5" fill="#1ea0e8" /><rect x="15" y="17" width="5" height="5" fill="#f8b50c" /></svg>
);
const AppEdge = () => (
  <svg width="30" height="30" viewBox="0 0 30 30"><defs><linearGradient id="ed" x1="0" x2="1" y1="0" y2="1"><stop offset="0" stopColor="#1e8fe0" /><stop offset="1" stopColor="#0b5ea8" /></linearGradient><linearGradient id="ed2" x1="0" x2="1" y1="0" y2=".6"><stop offset="0" stopColor="#2fb5ec" /><stop offset="1" stopColor="#7bd34d" /></linearGradient></defs><circle cx="15" cy="15" r="15" fill="url(#ed)" /><path d="M2 12C4 4 10 0 16 0c8 0 14 6 14 14 0 4-3 6-6 6-2 0-5-1-5-3 2-1 2-4 0-6-3-3-13-4-17 1z" fill="url(#ed2)" /><path d="M12 16c0-3 3-5 6-4 2 1 2 3 1 5-1 3 3 4 6 3-2 5-7 8-11 8 3-2 0-6-2-12z" fill="#1c1c1c" opacity=".85" /></svg>
);
const AppAi = () => (
  <svg width="30" height="30" viewBox="0 0 30 30"><defs><linearGradient id="ai" x1="0" x2="1" y1="1" y2="0"><stop offset="0" stopColor="#5a2df0" /><stop offset="1" stopColor="#1f9cf5" /></linearGradient></defs><rect width="30" height="30" fill="url(#ai)" /><path d="M5 22 11 9h3l-6 13zM11 22l7-13h3l-6 13zM19 22l1-6h3v6z" fill="#e6eefc" /></svg>
);
const AppSpotify = () => (
  <svg width="29" height="29" viewBox="0 0 29 29"><circle cx="14.5" cy="14.5" r="14.5" fill="#1ed760" /><g fill="none" stroke="#141414" strokeLinecap="round"><path d="M6 10c6-2 12-1 17 1.5" strokeWidth="2.6" /><path d="M7 15c5-1.5 10-.7 14.500 1.500" strokeWidth="2.200" /><path d="M8 19.500c4-1 8-.5 12 1.300" strokeWidth="1.800" /></g></svg>
);
const AppCreo = () => (
  <svg width="28" height="30" viewBox="0 0 28 30"><path d="M1 7 7 1h20v22l-6 6H1z" fill="#aee5f9" stroke="#44849d" /><path d="M21 7l6-6v22l-6 6z" fill="#7bb8cf" /><path d="M1 7 7 1h20l-6 6z" fill="#cdf0fb" /></svg>
);
const AppPhotos = () => (
  <svg width="26" height="28" viewBox="0 0 26 28"><defs><linearGradient id="ph" x1="0" x2="1" y1="0" y2="1"><stop offset="0" stopColor="#1e90e0" /><stop offset="1" stopColor="#6a52b8" /></linearGradient></defs><rect width="26" height="28" rx="4" fill="url(#ph)" /><circle cx="19" cy="5" r="2.400" fill="#eaf4ff" /><path d="M0 24 12 9l14 15c-1 3-3 4-4 4H4c-2 0-4-2-4-4z" fill="#37c4ee" /><path d="M5 28 13 19l9 9z" fill="#2b8fd9" /></svg>
);
const BingFigure = () => (
  <svg width="60" height="36" viewBox="0 0 60 36"><path d="M1 34c3-6 8-8 14-8s14 2 16 8z" fill="#6e3a22" /><path d="M14 26l3 8h-4z" fill="#2a3c88" /><circle cx="16" cy="11" r="8.500" fill="#dcc0a0" /><path d="M7 8c1-6 6-8 10-7 5 0 8 3 8 8l-4-2c-4 2-8 2-14 1z" fill="#a8a8a4" /><path d="M8 14c0 10 4 15 8 15s9-5 9-15c-2 5-15 5-17 0z" fill="#c8c6c0" /><path d="M26 17l12-2 2 3-14 1z" fill="#222" /><path d="M28 23h30v4l-2 3H30l-2-3z" fill="#8a5a2a" /><path d="M40 11v12M46 14v9M53 14v9" stroke="#c8a450" strokeWidth="1.800" /></svg>
);

export default function App() {
  return (
    <Page>
      <Global />
      <TitleBar>
        <QuickBar>
          <Cube s={17} />
          <LogoText>creo<sup>®</sup></LogoText>
          <BarRule $ml={6} />
          <Quick $ml={10}><Doc /></Quick>
          <Quick $ml={11}><OpenFolder /></Quick>
          <Quick $ml={11}><Save /></Quick>
          <Quick $ml={11}><Undo /></Quick>
          <Quick $ml={10}><Caret c="#8b9192" s={8} /></Quick>
          <Quick $ml={11}><Undo flip /></Quick>
          <Quick $ml={10}><Caret c="#8b9192" s={8} /></Quick>
          <Quick $ml={10}><ListTree /></Quick>
          <Quick $ml={10}><Windows2 /></Quick>
          <Quick $ml={11}><Caret c="#747b7c" s={8} /></Quick>
          <Quick $ml={10}><WinClose /></Quick>
          <BarRule $ml={6} />
          <Quick $ml={8}><CustomizeArrow /></Quick>
        </QuickBar>
        <TitleText>COLLAR (Active) - Creo Parametric</TitleText>
        <WindowButtons>
          <svg width="11" height="3" viewBox="0 0 11 3"><rect y="0" width="11" height="2" fill="#8e9596" /></svg>
          <svg width="14" height="13" viewBox="0 0 14 13" fill="none" stroke="#8e9596" strokeWidth="1.5"><rect x="1" y="4" width="9" height="8" /><path d="M4 4V1h9v8h-3" /></svg>
          <svg width="12" height="12" viewBox="0 0 12 12"><path d="M1 1l10 10M11 1 1 11" stroke="#8e9596" strokeWidth="1.8" /></svg>
        </WindowButtons>
      </TitleBar>

      <MenuBar>
        <FileTab>File</FileTab>
        <MenuItem>Model</MenuItem>
        <MenuItem>Analysis</MenuItem>
        <MenuItem>Live Simulation</MenuItem>
        <MenuItem>Annotate</MenuItem>
        <MenuItem>Tools</MenuItem>
        <MenuItem>View</MenuItem>
        <MenuItem>Flexible Modeling</MenuItem>
        <MenuItem>Applications</MenuItem>
        <ContextTab>Extrude</ContextTab>
        <MenuIcons>
          <MenuIcon $w={29}><svg width="14" height="9" viewBox="0 0 14 9"><path d="M7 0l7 7-1.500 2L7 4 1.500 9 0 7z" fill="#e6e9e9" /></svg></MenuIcon>
          <MenuIcon $w={29}><svg width="18" height="20" viewBox="0 0 18 20"><circle cx="10" cy="7" r="6" fill="#d4d8d8" /><path d="M1 18c5 1 10 0 13-4" fill="none" stroke="#b4b8b8" strokeWidth="1.200" /></svg></MenuIcon>
          <MenuIcon $w={29}><svg width="18" height="15" viewBox="0 0 18 15"><path d="M9 1l9 4-9 4-9-4z" fill="#e6e9e9" /><path d="M4 8v4c3 2 7 2 10 0V8l-5 2z" fill="#e6e9e9" /></svg></MenuIcon>
          <MenuIcon $w={17}><Caret c="#e6e9e9" s={8} /></MenuIcon>
          <MenuIcon $w={29}><svg width="14" height="18" viewBox="0 0 14 18"><path d="M2 6c0-6 10-6 10 0 0 4-4 3-4 7H5.500c0-5 3.500-4 3.500-7 0-2-4-2-4 0z" fill="#f0f2f2" /><rect x="5.500" y="14.500" width="3" height="3" fill="#f0f2f2" /></svg></MenuIcon>
        </MenuIcons>
      </MenuBar>

      <Ribbon>
        <FeatureIcon><ExtrudeBig /></FeatureIcon>
        <MainGroup>
          <Fields>
            <FieldCol $w={125}>
              <FieldLabel>Extrude as</FieldLabel>
              <ModeButton $active><SolidCube />Solid</ModeButton>
              <ModeButton><SurfaceIcon />Surface</ModeButton>
            </FieldCol>
            <FieldCol $w={229}>
              <FieldLabel>Depth</FieldLabel>
              <DepthRow>
                <SplitButton><span><DepthSymbol /></span><span><Caret c="#5c6062" s={9} /></span></SplitButton>
                <DepthInput><span>15.00</span><span><Caret c="#5c6062" s={9} /></span></DepthInput>
                <FlipWrap><FlipIcon /></FlipWrap>
              </DepthRow>
            </FieldCol>
            <FieldCol $w={220}>
              <FieldLabel>Settings</FieldLabel>
              <DisabledRow><RemoveIcon />Remove Material</DisabledRow>
              <SquareWrap><SideSquare /></SquareWrap>
            </FieldCol>
          </Fields>
          <TabsRow>
            <RibbonTab $w={127}>Placement</RibbonTab>
            <RibbonTab $w={111}>Options</RibbonTab>
            <RibbonTab $w={149}>Body Options</RibbonTab>
            <RibbonTab $w={126}>Properties</RibbonTab>
          </TabsRow>
        </MainGroup>
        <PreviewGroup>
          <PreviewSlot $ml={27}><Pause /></PreviewSlot>
          <PreviewSlot $ml={20}><NoIcon /></PreviewSlot>
          <PreviewSlot $ml={14}><MeshIcon /></PreviewSlot>
          <ToggleButton $ml={6}><ShadeIcon /></ToggleButton>
          <PreviewSlot $ml={11}><Glasses /></PreviewSlot>
        </PreviewGroup>
        <ActionGroup>
          <OkButton><Check />OK</OkButton>
          <CancelButton><CrossBig />Cancel</CancelButton>
        </ActionGroup>
        <HelpBox>
          Create 3D geometry by translating a 2D<br />
          section normal to the sketching plane as a<br />
          solid or a surface, adding or removing ma...<br />
          <ReadMore>Read more...</ReadMore>
        </HelpBox>
        <DatumPanel>
          <DatumIcon />
          <span>Datum</span>
          <Caret c="#6f7375" s={9} />
        </DatumPanel>
      </Ribbon>

      <Body>
        <SidePanel>
          <PanelTabs>
            <PanelTab $active $w={124} $gap={7}><NodesIcon s={18} />Model Tree</PanelTab>
            <PanelTab $w={91} $gap={5}><FolderTabIcon /><FadedLabel>Folder</FadedLabel></PanelTab>
            <PanelTab $w={89} $gap={6}><FavIcon /><FadedLabel>Favori</FadedLabel></PanelTab>
          </PanelTabs>
          <PanelHeader>
            <PanelTitle>Model Tree</PanelTitle>
            <HeaderIcon><Hammer /></HeaderIcon>
            <HeaderIcon $ml={10.5}><Caret c="#66696b" s={9} /></HeaderIcon>
            <HeaderIcon $ml={11.5}><ListDoc /></HeaderIcon>
            <HeaderIcon $ml={9.5}><Caret c="#66696b" s={9} /></HeaderIcon>
            <HeaderIcon $ml={16.5}><HideTree /></HeaderIcon>
          </PanelHeader>
          <FilterRow>
            <Funnel />
            <SearchField><SmallX /></SearchField>
            <HeaderIcon $ml={6}><Caret c="#66696b" s={9} /></HeaderIcon>
            <HeaderIcon $ml={14}><Plus /></HeaderIcon>
          </FilterRow>
          <Tree>
            <TreeRow $pad={14}><TreeIcon $w={25}><PartIcon /></TreeIcon>COLLAR.PRT</TreeRow>
            <TreeRow $pad={12}>
              <TreeArrow><svg width="9" height="11" viewBox="0 0 9 11"><path d="M0 0l9 5.500L0 11z" fill="#7e8284" /></svg></TreeArrow>
              <TreeIcon $w={26}><BodiesIcon /></TreeIcon>Bodies (1)
            </TreeRow>
            <TreeRow $pad={38}><TreeIcon $w={26}><PlaneIcon /></TreeIcon>RIGHT</TreeRow>
            <TreeRow $pad={38}><TreeIcon $w={26}><PlaneIcon /></TreeIcon>TOP</TreeRow>
            <TreeRow $pad={38}><TreeIcon $w={26}><PlaneIcon /></TreeIcon>FRONT</TreeRow>
            <TreeRow $pad={38}><TreeIcon $w={26}><CsysIcon /></TreeIcon>PRT_CSYS_DEF</TreeRow>
            <TreeRow $pad={38}><TreeIcon $w={25}><SketchGhost /></TreeIcon><SelectedLabel>Sketch 1</SelectedLabel></TreeRow>
            <GreenRule />
            <TreeRow $pad={11}>
              <TreeArrow><svg width="11" height="9" viewBox="0 0 11 9"><path d="M0 0h11L5.500 9z" fill="#7e8284" /></svg></TreeArrow>
              <TreeIcon $w={27}><ExtrudeSmall /></TreeIcon><Star />Extrude 1
            </TreeRow>
            <TreeRow $pad={63}><TreeIcon $w={26}><SketchPencil /></TreeIcon><Star />Sketch 1</TreeRow>
          </Tree>
        </SidePanel>
        <Viewport>
          <ViewBar>
            {ViewIcons.map((icon, i) => <ViewSlot key={i} $on={i === 10 || i === 11}>{icon}</ViewSlot>)}
          </ViewBar>
          <Page3DModel />
        </Viewport>
      </Body>

      <StatusBar>
        <StatusToggle><NodesIcon s={14} /></StatusToggle>
        <StatusIcon $ml={5}><svg width="22" height="24" viewBox="0 0 22 24"><circle cx="12" cy="12" r="9" fill="#5ba6d6" /><path d="M6 8c4-1 8 2 8 5s-3 6-7 4" fill="#87c66d" opacity=".7" /><ellipse cx="10" cy="13" rx="5" ry="12" transform="rotate(30 10 13)" fill="none" stroke="#9a9ea0" strokeWidth="1.400" /></svg></StatusIcon>
        <StatusIcon $ml={9}><svg width="20" height="22" viewBox="0 0 20 22"><rect x="1" y="1" width="18" height="20" fill="#f3f5f6" stroke="#2d7ea3" strokeWidth="1.400" /></svg></StatusIcon>
        <StatusRule $ml={13} />
        <StatusIcon $ml={3}><svg width="14" height="16" viewBox="0 0 14 16"><path d="M0 4h7V0l7 8-7 8v-4H0z" fill="#5db7df" stroke="#1e6c91" /></svg></StatusIcon>
        <StatusMessage>Select a plane or planar surface as the sketching plane, or select a sketch.</StatusMessage>
        <StatusRight>
          <StatusRule $ml={0} />
          <StatusRule $ml={1} />
          <FindButton>
            <span><svg width="21" height="24" viewBox="0 0 21 24"><path d="M3 2h5v6h5V2h5v6l3 14h-8v-8H8v8H0L3 8z" fill="#55595b" /><path d="M2 18h5v4H1zM14 18h5l1 4h-6z" fill="#a9adaf" /></svg></span>
            <span><Caret c="#66696b" s={8} /></span>
          </FindButton>
          <StatusRule $ml={3} />
          <SelectedCount>1 selected</SelectedCount>
          <FilterSelect><span>Sketch</span><span><Caret c="#77797b" s={8} /></span></FilterSelect>
        </StatusRight>
      </StatusBar>

      <Taskbar>
        <svg width="29" height="29" viewBox="0 0 29 29"><defs><linearGradient id="win" x1="0" x2="1" y1="0" y2="1"><stop offset="0" stopColor="#6fd6fa" /><stop offset="1" stopColor="#0b9bf2" /></linearGradient></defs><path d="M0 0h14v14H0zM15 0h14v14H15zM0 15h14v14H0zM15 15h14v14H15z" fill="url(#win)" /></svg>
        <SearchPill>
          <svg width="18" height="19" viewBox="0 0 18 19"><circle cx="7.500" cy="7.500" r="6.500" fill="none" stroke="#d8d8d8" strokeWidth="1.600" /><path d="M12 12l5 6" stroke="#d8d8d8" strokeWidth="1.800" /></svg>
          <span>Search</span>
          <BingFigure />
        </SearchPill>
        <AppSlot><AppCopilot /></AppSlot>
        <AppSlot><AppWeather /></AppSlot>
        <AppSlot><AppChat /></AppSlot>
        <AppSlot><AppExplorer /><AppDot /></AppSlot>
        <AppSlot><AppStore /></AppSlot>
        <AppSlot><AppEdge /></AppSlot>
        <AppSlot><AppAi /></AppSlot>
        <AppSlot><AppSpotify /><AppDot /></AppSlot>
        <AppSlot $active><AppCreo /><AppDot $active /></AppSlot>
        <AppSlot><AppPhotos /><AppDot /></AppSlot>
        <Tray>
          <TrayIcon $w={20}><svg width="14" height="9" viewBox="0 0 14 9"><path d="M1 8l6-6 6 6" fill="none" stroke="#f2f2f2" strokeWidth="1.800" /></svg></TrayIcon>
          <TrayIcon $w={59}><svg width="22" height="24" viewBox="0 0 22 24"><path d="M3 12a8 8 0 0 1 14-5M19 12a8 8 0 0 1-14 5" fill="none" stroke="#eee" strokeWidth="1.400" /><path d="M17 3v4h-4M5 21v-4h4" fill="none" stroke="#eee" strokeWidth="1.200" /><circle cx="15" cy="17" r="5.500" fill="#f00" /></svg></TrayIcon>
          <LangBlock>ENG<br />IN</LangBlock>
          <TrayIcon $w={21}><svg width="21" height="22" viewBox="0 0 21 22" fill="none" stroke="#eee" strokeWidth="1.200"><circle cx="10" cy="10" r="8.500" /><ellipse cx="10" cy="10" rx="4" ry="8.500" /><path d="M2 7h16M2 13h16" /><circle cx="15" cy="16" r="5" fill="#1c1c1c" /><path d="M12 19l6-6" /></svg></TrayIcon>
          <TrayIcon $w={38}><svg width="22" height="20" viewBox="0 0 22 20" fill="none" stroke="#eee" strokeWidth="1.300"><path d="M2 7h3l5-4v14l-5-4H2z" /><path d="M13 6c2 2 2 6 0 8M16 4c3 3 3 9 0 12M19 2c4 4 4 12 0 16" /></svg></TrayIcon>
          <TrayIcon $w={20}><svg width="20" height="22" viewBox="0 0 20 22" fill="none" stroke="#eee" strokeWidth="1.200"><rect x="1" y="7" width="14" height="11" rx="2" /><path d="M15 10h2v5h-2" /><path d="M9 1 5 13h5l-3 8 8-12h-5l2-8z" fill="#1c1c1c" /></svg></TrayIcon>
          <ClockBlock>9:05 PM<br />3/7/2024</ClockBlock>
          <BellSlot><svg width="17" height="20" viewBox="0 0 17 20"><path d="M8.500 0c4 0 6 3 6 7v5l2 3H0l2-3V7c0-4 2.500-7 6.500-7z" fill="#e3b2ee" /><path d="M5.500 17h6c-.5 3-5.500 3-6 0z" fill="#e3b2ee" /></svg></BellSlot>
        </Tray>
      </Taskbar>
    </Page>
  );
}
